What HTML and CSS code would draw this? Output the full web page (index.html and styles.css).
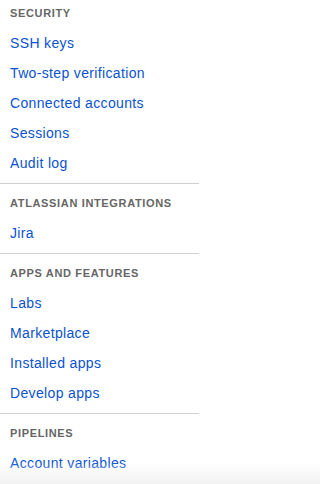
FILE: index.html
```html
<!DOCTYPE html>
<html>
<head>
<meta charset="utf-8">
<link rel="stylesheet" href="styles.css">
</head>
<body>
<nav class="sidebar">
  <section class="group">
    <h3 class="group-title">Security</h3>
    <a class="nav-link" href="#">SSH keys</a>
    <a class="nav-link" href="#">Two-step verification</a>
    <a class="nav-link" href="#">Connected accounts</a>
    <a class="nav-link" href="#">Sessions</a>
    <a class="nav-link" href="#">Audit log</a>
  </section>
  <section class="group">
    <h3 class="group-title">Atlassian integrations</h3>
    <a class="nav-link" href="#">Jira</a>
  </section>
  <section class="group">
    <h3 class="group-title">Apps and features</h3>
    <a class="nav-link" href="#">Labs</a>
    <a class="nav-link" href="#">Marketplace</a>
    <a class="nav-link" href="#">Installed apps</a>
    <a class="nav-link" href="#">Develop apps</a>
  </section>
  <section class="group">
    <h3 class="group-title">Pipelines</h3>
    <a class="nav-link" href="#">Account variables</a>
  </section>
</nav>
<div class="fade"></div>
</body>
</html>
```

FILE: styles.css
```css
html, body {
  margin: 0;
  padding: 0;
  background: #ffffff;
}
body {
  font-family: "Liberation Sans", Arial, sans-serif;
  height: 484px;
  overflow: hidden;
  position: relative;
}
.sidebar {
  width: 199px;
  display: flex;
  flex-direction: column;
}
.group {
  display: flex;
  flex-direction: column;
  padding: 9px 0 5px;
  border-top: 1px solid #d0d0d0;
}
.group:first-child {
  padding-top: 3px;
  border-top: none;
}
.group-title {
  margin: 0 0 5px;
  padding-left: 10px;
  height: 20px;
  line-height: 20px;
  font-size: 11px;
  font-weight: bold;
  text-transform: uppercase;
  color: #666666;
  letter-spacing: 0.65px;
  white-space: nowrap;
}
.nav-link {
  display: block;
  padding-left: 10px;
  height: 30px;
  line-height: 30px;
  font-size: 14px;
  letter-spacing: 0.35px;
  color: #0a52d0;
  text-decoration: none;
  white-space: nowrap;
}
.fade {
  position: absolute;
  left: 0;
  right: 0;
  bottom: 0;
  height: 22px;
  background: linear-gradient(to bottom, rgba(242,242,242,0), rgba(242,242,242,1));
  pointer-events: none;
}
```
